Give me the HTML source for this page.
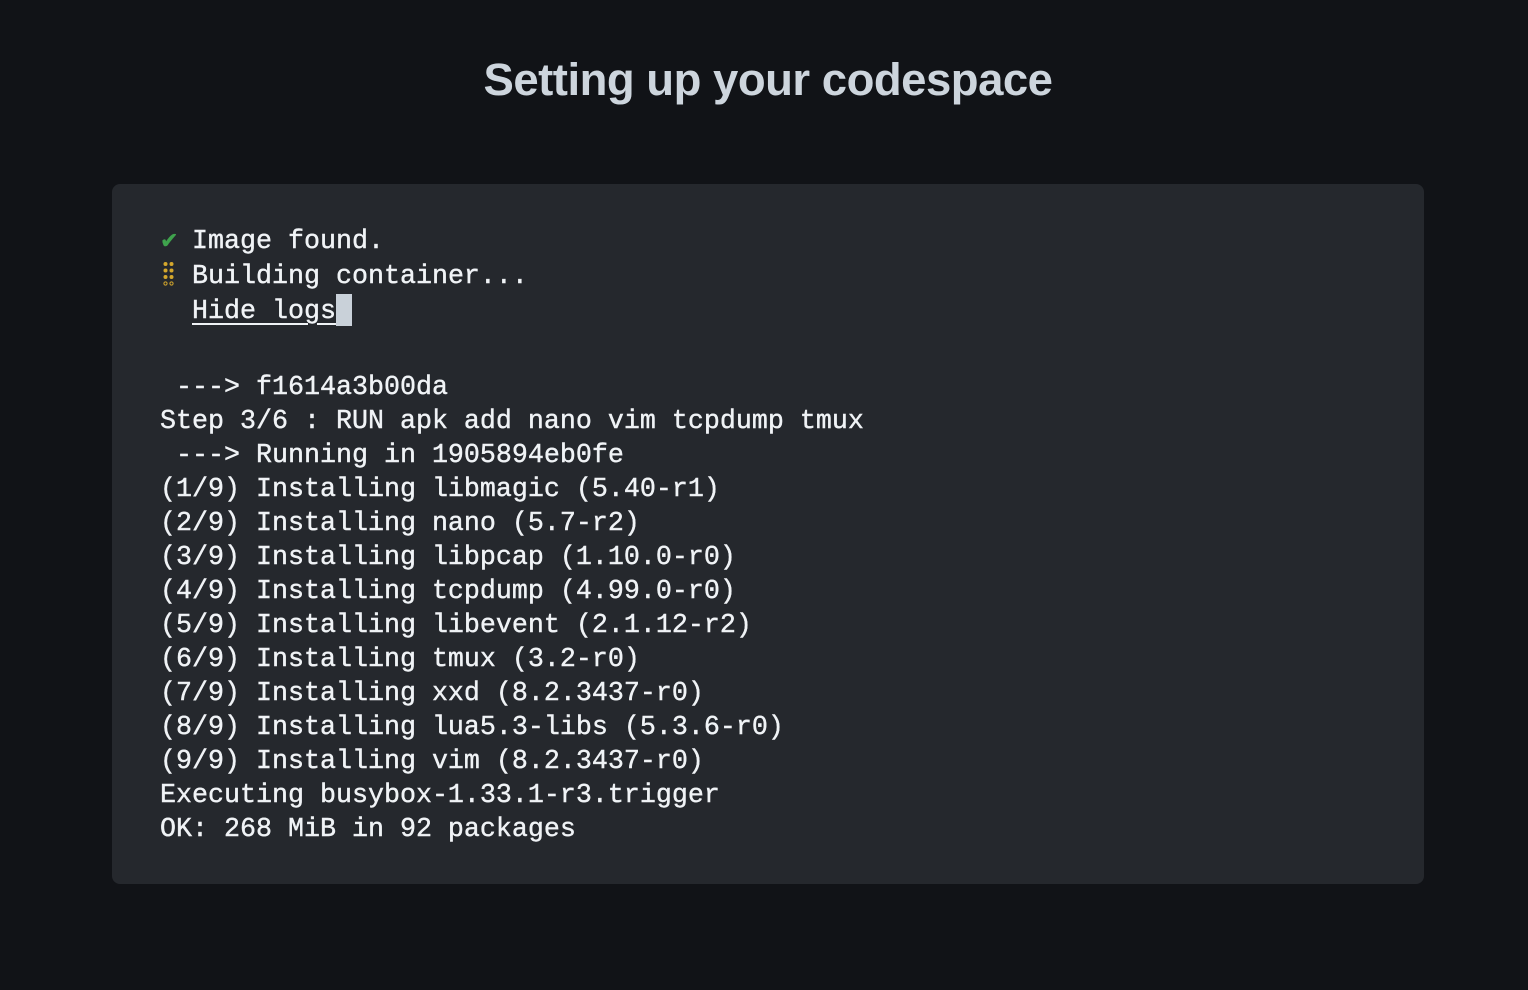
<!DOCTYPE html>
<html><head><meta charset="utf-8"><style>
html,body{margin:0;padding:0;background:#111317;width:1528px;height:990px;overflow:hidden}
h1{position:absolute;left:4px;width:1528px;top:52px;margin:0;text-align:center;font:bold 45.5px "Liberation Sans",sans-serif;color:#cdd5dd;letter-spacing:-0.5px;line-height:56px}
.panel{position:absolute;left:112px;top:184px;width:1312px;height:700px;background:#25282d;border-radius:8px}
.t{position:absolute;left:160px;font:26.67px/34px "Liberation Mono",monospace;color:#f0f3f6;white-space:pre;-webkit-text-stroke:0.4px #f0f3f6}
.ck{display:inline-block;width:16px;overflow:visible;color:#3fa34d;-webkit-text-stroke:0.4px #3fa34d;font-size:22px}
.dots{display:inline-block;width:16px;height:28px;vertical-align:-6px}
u{text-decoration:underline;text-underline-offset:5px;text-decoration-thickness:2px}
.cur{display:inline-block;width:16px;height:32px;background:#c9d1d9;vertical-align:-8px}
</style></head><body>
<h1>Setting up your codespace</h1>
<div class="panel"></div>
<div class="t" style="top:225px"><span class="ck">✔</span> Image found.
<svg class="dots" viewBox="0 0 16 28"><g fill="#d4a72c"><circle cx="5.5" cy="3" r="2"/><circle cx="11.5" cy="3" r="2"/><circle cx="5.5" cy="9.5" r="2"/><circle cx="11.5" cy="9.5" r="2"/><circle cx="5.5" cy="16" r="2"/><circle cx="11.5" cy="16" r="2"/></g><g fill="none" stroke="#d4a72c" stroke-width="1"><circle cx="5.5" cy="22.5" r="1.6"/><circle cx="11.5" cy="22.5" r="1.6"/></g></svg> Building container...
  <u>Hide logs</u><span class="cur"></span></div>
<div class="t" style="top:371px"> ---&gt; f1614a3b00da
Step 3/6 : RUN apk add nano vim tcpdump tmux
 ---&gt; Running in 1905894eb0fe
(1/9) Installing libmagic (5.40-r1)
(2/9) Installing nano (5.7-r2)
(3/9) Installing libpcap (1.10.0-r0)
(4/9) Installing tcpdump (4.99.0-r0)
(5/9) Installing libevent (2.1.12-r2)
(6/9) Installing tmux (3.2-r0)
(7/9) Installing xxd (8.2.3437-r0)
(8/9) Installing lua5.3-libs (5.3.6-r0)
(9/9) Installing vim (8.2.3437-r0)
Executing busybox-1.33.1-r3.trigger
OK: 268 MiB in 92 packages</div>
</body></html>
